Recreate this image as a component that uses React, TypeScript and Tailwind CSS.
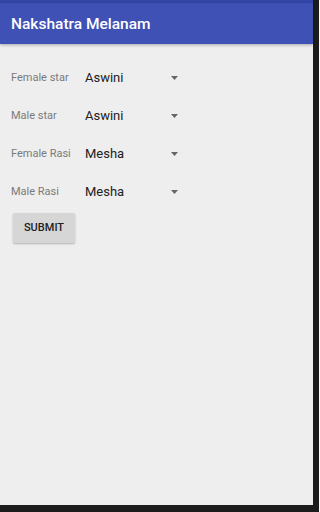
import React from 'react';

const rows = [
  { label: 'Female star', value: 'Aswini' },
  { label: 'Male star', value: 'Aswini' },
  { label: 'Female Rasi', value: 'Mesha' },
  { label: 'Male Rasi', value: 'Mesha' },
];

export default function App() {
  return (
    <div className="flex h-[512px] w-[319px] bg-[#1c1c1c]" style={{ fontFamily: 'Roboto, "Liberation Sans", sans-serif' }}>
      <div className="flex h-[505px] w-[313px] flex-col bg-[#eeeeee]">
        <div className="h-[3px] bg-[#3346a8]" />
        <div className="flex h-[41px] items-center bg-[#3f51b5] px-[11px] pt-[3px] shadow-[0_1px_3px_rgba(0,0,0,0.3)]">
          <span className="text-[15.5px] font-medium text-white">Nakshatra Melanam</span>
        </div>
        <div className="flex flex-col pt-[15px]">
          {rows.map((row) => (
            <div key={row.label} className="flex h-[38px] items-center">
              <span className="w-[85px] pl-[11px] text-[11px] text-[#7a7a7a]">{row.label}</span>
              <span className="w-[86px] text-[13px] text-[#212121]">{row.value}</span>
              <svg width="7" height="4" viewBox="0 0 7 4">
                <path d="M0 0 L7 0 L3.5 4 Z" fill="#666666" />
              </svg>
            </div>
          ))}
          <div className="pl-[13px] pt-[2px]">
            <button className="flex h-[30px] w-[62px] items-center justify-center rounded-[2px] bg-[#d6d6d6] pt-[1px] text-[11px] font-medium text-[#212121] shadow-[0_1px_2px_rgba(0,0,0,0.25)]">
              SUBMIT
            </button>
          </div>
        </div>
      </div>
    </div>
  );
}
